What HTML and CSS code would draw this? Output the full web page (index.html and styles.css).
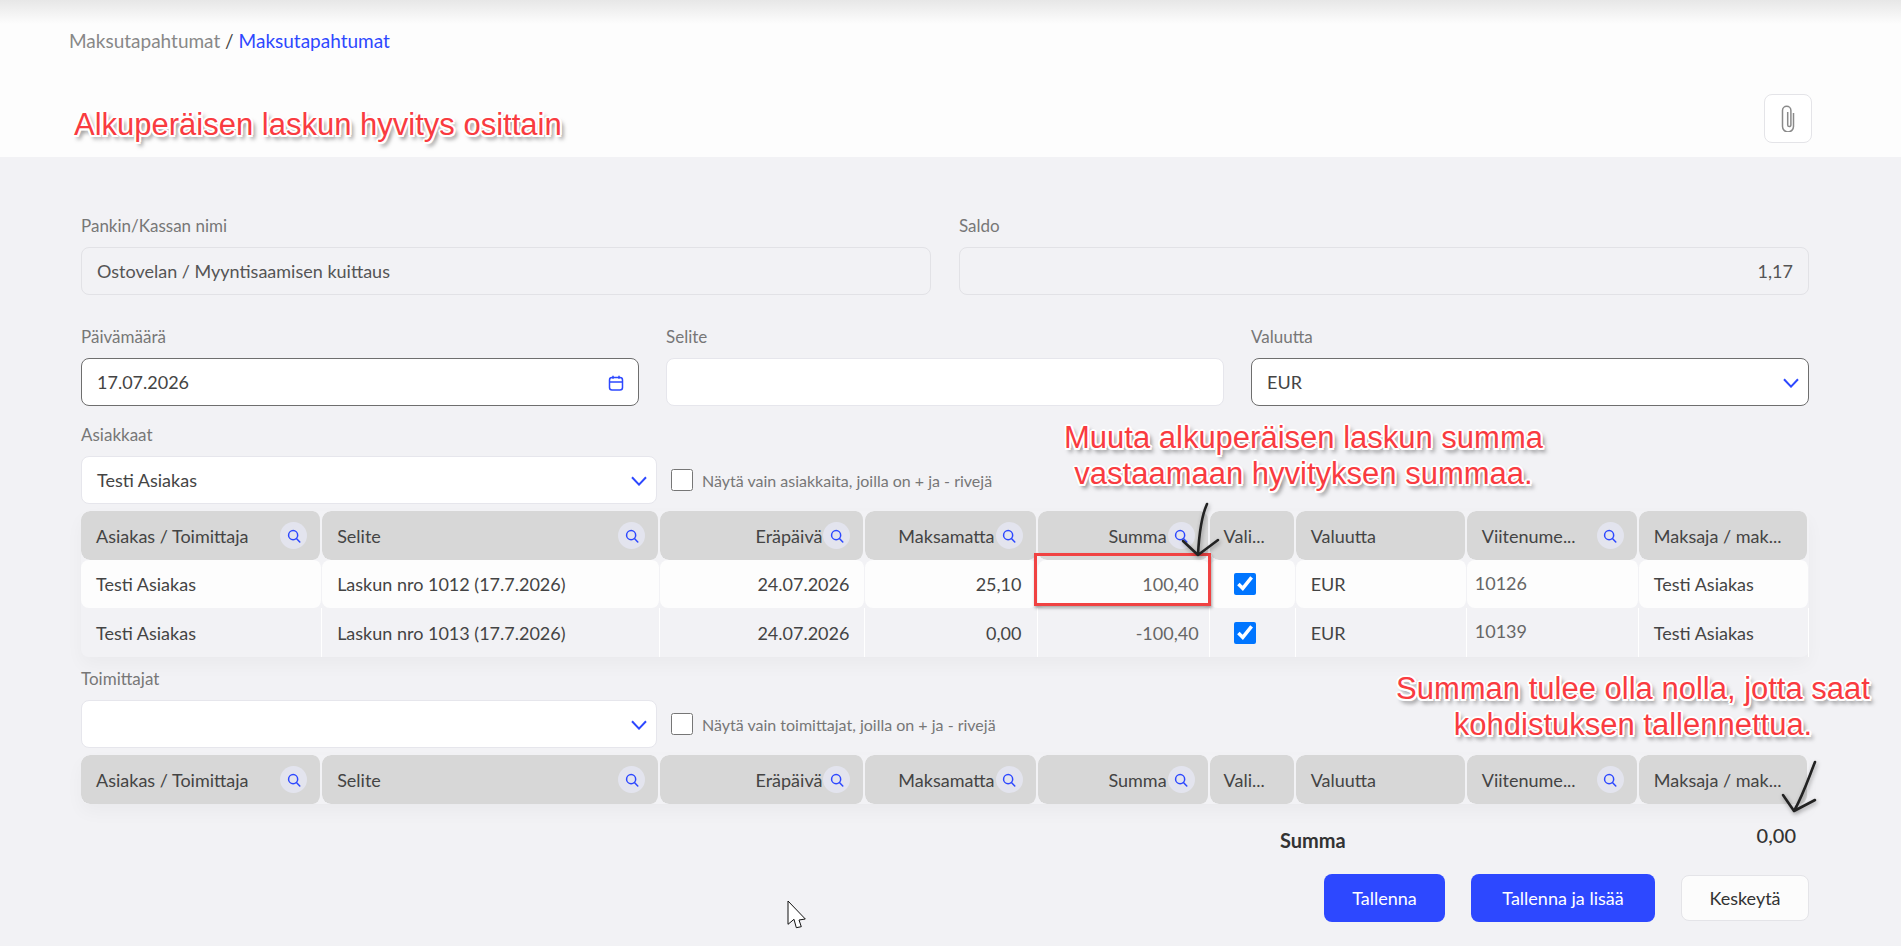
FILE: index.html
```html
<!DOCTYPE html>
<html lang="fi">

<head>
    <meta charset="UTF-8" />
    <title>Maksutapahtumat</title>
    <link rel="stylesheet" href="styles.css">
</head>

<body>
    <svg width="0" height="0" class="icon-defs" aria-hidden="true">
        <symbol id="icon-search" viewBox="0 0 16 16">
            <circle cx="7" cy="7" r="5.2" fill="none" stroke="currentColor" stroke-width="1.7" />
            <path d="M10.8 10.8 14.6 14.8" fill="none" stroke="currentColor" stroke-width="1.7" stroke-linecap="round" />
        </symbol>
        <symbol id="icon-chevron" viewBox="0 0 16 10">
            <path d="M1 1.2 8 8.6 15 1.2" fill="none" stroke="currentColor" stroke-width="2" />
        </symbol>
    </svg>

    <div class="page">
        <header class="page-header">
            <nav class="breadcrumb">
                <span class="breadcrumb-parent">Maksutapahtumat</span> / <a class="breadcrumb-current" href="#">Maksutapahtumat</a>
            </nav>
            <div class="title-row">
                <h1 class="note page-title">Alkuperäisen laskun hyvitys osittain</h1>
                <button class="attach-btn" type="button" aria-label="Liitteet">
                    <svg width="14" height="27" viewBox="0 0 14 27" fill="none" stroke="#8a8a8a" stroke-width="1.5">
                        <path d="M12.5 8v13.5a5.5 5.5 0 0 1-11 0V5.5a4.2 4.2 0 0 1 8.4 0V20a1.6 1.6 0 0 1-3.2 0V7" />
                    </svg>
                </button>
            </div>
        </header>

        <main class="content">
            <div class="form-row form-row-two">
                <div class="field">
                    <label class="field-label">Pankin/Kassan nimi</label>
                    <div class="box box-disabled">Ostovelan / Myyntisaamisen kuittaus</div>
                </div>
                <div class="field">
                    <label class="field-label">Saldo</label>
                    <div class="box box-disabled box-right">1,17</div>
                </div>
            </div>

            <div class="form-row form-row-three">
                <div class="field">
                    <label class="field-label">Päivämäärä</label>
                    <div class="box box-active">
                        <span>17.07.2026</span>
                        <svg class="box-icon" width="16" height="16" viewBox="0 0 16 16" fill="none" stroke="currentColor" stroke-width="1.5">
                            <rect x="1.5" y="2.5" width="13" height="12.5" rx="2.5" />
                            <path d="M1.5 7h13M5 .8v3M11 .8v3" />
                        </svg>
                    </div>
                </div>
                <div class="field">
                    <label class="field-label">Selite</label>
                    <div class="box"></div>
                </div>
                <div class="field">
                    <label class="field-label">Valuutta</label>
                    <div class="box box-active">
                        <span>EUR</span>
                        <svg class="box-icon"><use href="#icon-chevron" /></svg>
                    </div>
                </div>
            </div>

            <section class="party-block">
                <label class="field-label">Asiakkaat</label>
                <div class="party-filter">
                    <div class="box party-select">
                        <span>Testi Asiakas</span>
                        <svg class="box-icon"><use href="#icon-chevron" /></svg>
                    </div>
                    <label class="check-label"><input type="checkbox" /> Näytä vain asiakkaita, joilla on + ja - rivejä</label>
                </div>
                <table class="grid">
                    <colgroup>
                        <col class="col-party"><col class="col-desc"><col class="col-date"><col class="col-money"><col class="col-money"><col class="col-pick"><col class="col-currency"><col class="col-ref"><col class="col-payer">
                    </colgroup>
                    <thead>
                        <tr>
                            <th><div class="th-in"><span>Asiakas / Toimittaja</span><span class="search-chip"><svg><use href="#icon-search" /></svg></span></div></th>
                            <th><div class="th-in"><span>Selite</span><span class="search-chip"><svg><use href="#icon-search" /></svg></span></div></th>
                            <th><div class="th-in th-end"><span>Eräpäivä</span><span class="search-chip"><svg><use href="#icon-search" /></svg></span></div></th>
                            <th><div class="th-in th-end"><span>Maksamatta</span><span class="search-chip"><svg><use href="#icon-search" /></svg></span></div></th>
                            <th><div class="th-in th-end"><span>Summa</span><span class="search-chip"><svg><use href="#icon-search" /></svg></span></div></th>
                            <th><div class="th-in th-pick"><span>Vali...</span></div></th>
                            <th><div class="th-in"><span>Valuutta</span></div></th>
                            <th><div class="th-in"><span>Viitenume...</span><span class="search-chip"><svg><use href="#icon-search" /></svg></span></div></th>
                            <th><div class="th-in"><span>Maksaja / mak...</span></div></th>
                        </tr>
                    </thead>
                    <tbody>
                        <tr>
                            <td>Testi Asiakas</td>
                            <td>Laskun nro 1012 (17.7.2026)</td>
                            <td class="num">24.07.2026</td>
                            <td class="num">25,10</td>
                            <td class="num editable">100,40</td>
                            <td class="pick"><input type="checkbox" checked /></td>
                            <td>EUR</td>
                            <td class="ref">10126</td>
                            <td>Testi Asiakas</td>
                        </tr>
                        <tr>
                            <td>Testi Asiakas</td>
                            <td>Laskun nro 1013 (17.7.2026)</td>
                            <td class="num">24.07.2026</td>
                            <td class="num">0,00</td>
                            <td class="num editable">-100,40</td>
                            <td class="pick"><input type="checkbox" checked /></td>
                            <td>EUR</td>
                            <td class="ref">10139</td>
                            <td>Testi Asiakas</td>
                        </tr>
                    </tbody>
                </table>
            </section>

            <section class="party-block party-block-second">
                <label class="field-label">Toimittajat</label>
                <div class="party-filter">
                    <div class="box party-select">
                        <span></span>
                        <svg class="box-icon"><use href="#icon-chevron" /></svg>
                    </div>
                    <label class="check-label"><input type="checkbox" /> Näytä vain toimittajat, joilla on + ja - rivejä</label>
                </div>
                <table class="grid">
                    <colgroup>
                        <col class="col-party"><col class="col-desc"><col class="col-date"><col class="col-money"><col class="col-money"><col class="col-pick"><col class="col-currency"><col class="col-ref"><col class="col-payer">
                    </colgroup>
                    <thead>
                        <tr>
                            <th><div class="th-in"><span>Asiakas / Toimittaja</span><span class="search-chip"><svg><use href="#icon-search" /></svg></span></div></th>
                            <th><div class="th-in"><span>Selite</span><span class="search-chip"><svg><use href="#icon-search" /></svg></span></div></th>
                            <th><div class="th-in th-end"><span>Eräpäivä</span><span class="search-chip"><svg><use href="#icon-search" /></svg></span></div></th>
                            <th><div class="th-in th-end"><span>Maksamatta</span><span class="search-chip"><svg><use href="#icon-search" /></svg></span></div></th>
                            <th><div class="th-in th-end"><span>Summa</span><span class="search-chip"><svg><use href="#icon-search" /></svg></span></div></th>
                            <th><div class="th-in th-pick"><span>Vali...</span></div></th>
                            <th><div class="th-in"><span>Valuutta</span></div></th>
                            <th><div class="th-in"><span>Viitenume...</span><span class="search-chip"><svg><use href="#icon-search" /></svg></span></div></th>
                            <th><div class="th-in"><span>Maksaja / mak...</span></div></th>
                        </tr>
                    </thead>
                </table>
            </section>

            <div class="total-row">
                <span class="total-label">Summa</span>
                <span class="total-value">0,00</span>
            </div>

            <div class="actions">
                <button class="btn btn-primary" type="button">Tallenna</button>
                <button class="btn btn-primary btn-wide" type="button">Tallenna ja lisää</button>
                <button class="btn btn-plain" type="button">Keskeytä</button>
            </div>
        </main>

        <!-- annotations drawn on top of the screenshot -->
        <p class="note note-amount">Muuta alkuperäisen laskun summa<br>vastaamaan hyvityksen summaa.</p>
        <p class="note note-zero">Summan tulee olla nolla, jotta saat<br>kohdistuksen tallennettua.</p>
        <div class="mark-box"></div>
        <svg class="arrow arrow-amount" width="50" height="60" viewBox="0 0 50 60">
            <path d="M32 3C27 14 24 34 23 54M8 40 23 54 43 39" />
        </svg>
        <svg class="arrow arrow-zero" width="40" height="56" viewBox="0 0 40 56">
            <path d="M36 3C30 18 24 36 15 52M4 36 15 52 36 41" />
        </svg>
        <svg class="cursor" width="20" height="29" viewBox="0 0 20 29">
            <path d="M1 1 18.3 19 12 20 14.3 26.7 9.3 27.7 7 19.3 1 24.3Z" />
        </svg>
    </div>
</body>

</html>
```

FILE: styles.css
```css
* {
    margin: 0;
    padding: 0;
    box-sizing: border-box;
    font-family: 'Lato', sans-serif;
}

body {
    background: #f2f2f5;
    color: #444;
    font-size: 17px;
    overflow: hidden;
}

.icon-defs {
    position: absolute;
}

.page {
    position: relative;
    height: 946px;
}

.page-header {
    height: 157px;
    padding: 30px 89px 0 69px;
    background: linear-gradient(#e7e7e7, #fdfdfd 24px);
}

.breadcrumb {
    font-size: 19px;
    line-height: 22px;
    color: #444;
}

.breadcrumb-parent {
    color: #888;
}

.breadcrumb-current {
    color: #2d48ff;
    text-decoration: none;
}

.title-row {
    display: flex;
    justify-content: space-between;
    align-items: flex-end;
    margin-top: 42px;
}

.note {
    color: #f93b40;
    font-family: 'Liberation Sans', sans-serif;
    font-size: 31px;
    font-weight: 400;
    line-height: 36px;
    text-shadow:
        2px 0 0 #fff, -2px 0 0 #fff, 0 2px 0 #fff, 0 -2px 0 #fff,
        1.5px 1.5px 0 #fff, -1.5px 1.5px 0 #fff, 1.5px -1.5px 0 #fff, -1.5px -1.5px 0 #fff,
        3px 4px 4px rgba(0, 0, 0, 0.55);
}

.page-title {
    margin-left: 5px;
}

.attach-btn {
    width: 48px;
    height: 49px;
    display: flex;
    align-items: center;
    justify-content: center;
    background: #fff;
    border: 1px solid #e4e4e8;
    border-radius: 8px;
}

.content {
    padding: 58px 92px 0 81px;
}

.form-row {
    display: grid;
}

.form-row-two {
    grid-template-columns: 1fr 1fr;
    gap: 28px;
}

.form-row-three {
    grid-template-columns: 1fr 1fr 1fr;
    gap: 27px;
    margin-top: 31px;
}

.field-label {
    display: block;
    color: #777;
    font-size: 17px;
    line-height: 22px;
    margin-bottom: 10px;
}

.box {
    height: 48px;
    padding: 0 9px 0 15px;
    display: flex;
    align-items: center;
    justify-content: space-between;
    background: #fff;
    border: 1px solid #e6e6ec;
    border-radius: 8px;
    color: #444;
    font-size: 18px;
}

.box-disabled {
    background: #f2f2f5;
    border-color: #e2e2e6;
    color: #555;
}

.box-right {
    justify-content: flex-end;
    padding-right: 15px;
}

.box-active {
    border-color: #6e6e6e;
}

.box-icon {
    width: 16px;
    height: 10px;
    margin-top: 2px;
    color: #2d48ff;
}

svg.box-icon[height="16"] {
    height: 16px;
    margin-right: 5px;
}

.party-block {
    margin-top: 18px;
}

.party-block-second {
    margin-top: 11px;
}

.party-filter {
    display: flex;
    align-items: center;
    margin-bottom: 7px;
}

.party-select {
    width: 576px;
}

.check-label {
    display: flex;
    align-items: center;
    gap: 9px;
    margin-left: 14px;
    color: #777;
    font-size: 16px;
}

.check-label input {
    width: 22px;
    height: 22px;
}

.grid {
    width: 1728px;
    table-layout: fixed;
    border-collapse: separate;
    border-spacing: 0;
    border-radius: 8px;
    box-shadow: 0 8px 18px rgba(0, 0, 0, 0.035);
}

.col-party {
    width: 241px;
}

.col-desc {
    width: 338px;
}

.col-date {
    width: 205px;
}

.col-money {
    width: 172px;
}

.col-pick {
    width: 86px;
}

.col-currency {
    width: 171px;
}

.col-ref {
    width: 172px;
}

.col-payer {
    width: 170px;
}

.grid th {
    height: 49px;
    padding: 0;
    background: #d7d7d7;
    background-clip: padding-box;
    border-right: 2px solid transparent;
    border-radius: 9px;
    color: #444;
    font-size: 18px;
    font-weight: 400;
}

.th-in {
    display: flex;
    align-items: center;
    justify-content: space-between;
    padding: 0 13px 0 15px;
    white-space: nowrap;
}

.th-end {
    justify-content: flex-end;
    gap: 1px;
}

.th-pick {
    padding-left: 14px;
}

.search-chip {
    width: 27px;
    height: 27px;
    display: flex;
    align-items: center;
    justify-content: center;
    background: #e3e4ee;
    border-radius: 50%;
    color: #2d48ff;
}

.search-chip svg {
    width: 14px;
    height: 14px;
}

.grid td {
    height: 49px;
    padding: 0 15px;
    border-right: 1px solid #fff;
    color: #444;
    font-size: 18px;
    white-space: nowrap;
}

.grid tbody tr:first-child td {
    height: 48px;
    background: #fdfdfd;
    border-right-color: #f2f2f5;
    border-radius: 8px;
}

.grid .num {
    text-align: right;
}

.grid .editable {
    padding-right: 10px;
    color: #666;
}

.grid .pick {
    padding: 0;
    text-align: center;
}

.grid .pick input {
    width: 22px;
    height: 22px;
    display: block;
    margin: 0 auto 0 24px;
}

.grid .ref {
    padding: 0 8px 3px;
    color: #666;
}

.total-row {
    display: flex;
    justify-content: flex-end;
    align-items: flex-start;
    height: 27px;
    margin-top: 20px;
    padding-right: 13px;
    color: #333;
    font-size: 20px;
    line-height: 22px;
}

.total-label {
    margin: 5px 411px 0 0;
    font-weight: 700;
}

.total-value {
    font-weight: 500;
}

.actions {
    display: flex;
    justify-content: flex-end;
    align-items: center;
    gap: 26px;
    margin-top: 23px;
}

.btn {
    width: 121px;
    height: 48px;
    border-radius: 8px;
    border: none;
    font-size: 18px;
}

.btn-primary {
    background: #2d48ff;
    color: #fff;
}

.btn-wide {
    width: 184px;
}

.btn-plain {
    width: 128px;
    height: 46px;
    background: #fcfcfc;
    border: 1px solid #e4e4e8;
    color: #333;
}

.note-amount,
.note-zero,
.mark-box,
.arrow,
.cursor {
    position: absolute;
}

.note-amount {
    left: 1059px;
    top: 420px;
    width: 489px;
    text-align: center;
    white-space: nowrap;
}

.note-zero {
    left: 1391px;
    top: 671px;
    width: 484px;
    text-align: center;
    white-space: nowrap;
}

.mark-box {
    left: 1034px;
    top: 553px;
    width: 177px;
    height: 53px;
    border: 3px solid #f04242;
    box-shadow: 1px 2px 3px rgba(0, 0, 0, 0.35);
}

.arrow path {
    fill: none;
    stroke: #222;
    stroke-width: 2.6;
    stroke-linecap: round;
    stroke-linejoin: round;
}

.arrow {
    filter: drop-shadow(1px 2px 2px rgba(0, 0, 0, 0.35));
}

.arrow-amount {
    left: 1175px;
    top: 501px;
}

.arrow-zero {
    left: 1779px;
    top: 759px;
}

.cursor {
    left: 787px;
    top: 900px;
}

.cursor path {
    fill: #fff;
    stroke: #111;
    stroke-width: 1;
}
```
